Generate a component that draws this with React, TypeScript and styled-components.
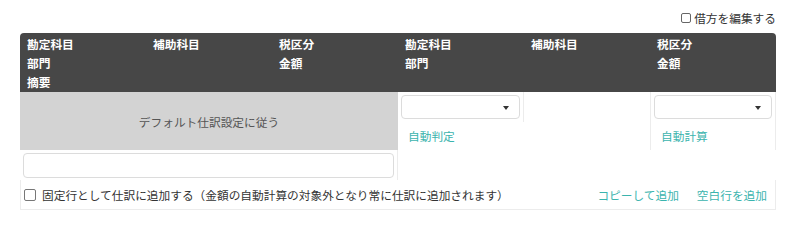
import styled, { createGlobalStyle } from "styled-components"

const GlobalStyle = createGlobalStyle`
  body {
    margin: 0;
    background: #fff;
    font-family: "Noto Sans CJK JP", "Noto Sans", sans-serif;
    font-size: 11.7px;
    color: #333;
  }
`

const Page = styled.div`
  padding: 0 24px 0 20px;
`

const TopBar = styled.div`
  height: 33px;
  display: flex;
  justify-content: flex-end;
  align-items: flex-end;
  padding-bottom: 7px;
  box-sizing: border-box;
`

const CheckLabel = styled.label`
  display: flex;
  align-items: center;
  line-height: 16px;
  color: #333;
  cursor: pointer;
  white-space: nowrap;
`

const Check = styled.input<{ small?: boolean }>`
  appearance: none;
  margin: 0 ${props => props.small ? "3px" : "6px"} 0 0;
  width: ${props => props.small ? "10px" : "12px"};
  height: ${props => props.small ? "10px" : "12px"};
  border: 1px solid ${props => props.small ? "#666" : "#777"};
  border-radius: 2px;
  background: #fff;
  box-sizing: border-box;
`

const Header = styled.div`
  background: #474747;
  border-radius: 4px 4px 0 0;
  display: grid;
  grid-template-columns: repeat(6, 1fr);
  grid-auto-rows: 19px;
  padding: 1px 0 1px;
  color: #fff;
  font-weight: bold;
`

const HeadCell = styled.div`
  padding-left: 7px;
  line-height: 19px;
  white-space: nowrap;
`

const Body = styled.div`
  display: grid;
  grid-template-columns: repeat(6, 1fr);
  grid-template-rows: 30px 28px 30px 30px;
`

const Default = styled.div`
  grid-column: 1 / 4;
  grid-row: 1 / 3;
  background: #d3d3d3;
  color: #555;
  display: flex;
  align-items: center;
  justify-content: center;
`

const Cell = styled.div<{ col: string; row: string; left?: boolean; right?: boolean }>`
  grid-column: ${props => props.col};
  grid-row: ${props => props.row};
  border-left: ${props => props.left ? "1px solid #ececec" : "none"};
  border-right: ${props => props.right ? "1px solid #ececec" : "none"};
  padding: 3px 3px 0 3px;
  box-sizing: border-box;
  min-width: 0;
`

const Select = styled.div`
  position: relative;
  height: 24px;
  border: 1px solid #dcdcdc;
  border-radius: 4px;
  background: #fff;
  box-sizing: border-box;

  &::after {
    content: "";
    position: absolute;
    right: 10px;
    top: 10px;
    border-left: 3.5px solid transparent;
    border-right: 3.5px solid transparent;
    border-top: 4px solid #333;
  }
`

const Auto = styled.a`
  display: block;
  color: #3bb4ae;
  padding: 1px 0 0 7px;
  line-height: 20px;
  text-decoration: none;
`

const TextInput = styled.input`
  display: block;
  width: 100%;
  height: 25px;
  border: 1px solid #dcdcdc;
  border-radius: 4px;
  box-sizing: border-box;
  background: #fff;
`

const Footer = styled.div`
  grid-column: 1 / 7;
  grid-row: 4;
  border: 1px solid #ececec;
  border-top: none;
  display: flex;
  align-items: center;
  justify-content: space-between;
  padding: 0 8px 0 3px;
`

const Links = styled.div`
  display: flex;
  gap: 18px;
`

const Link = styled.a`
  color: #3bb4ae;
  text-decoration: none;
`

const heads = [
  "勘定科目", "補助科目", "税区分", "勘定科目", "補助科目", "税区分",
  "部門", "", "金額", "部門", "", "金額",
  "摘要", "", "", "", "", "",
]

export default function App() {
  return (
    <Page>
      <GlobalStyle />
      <TopBar>
        <CheckLabel>
          <Check type="checkbox" small />
          借方を編集する
        </CheckLabel>
      </TopBar>
      <Header>
        {heads.map((h, i) => <HeadCell key={i}>{h}</HeadCell>)}
      </Header>
      <Body>
        <Default>デフォルト仕訳設定に従う</Default>
        <Cell col="4" row="1" right>
          <Select />
        </Cell>
        <Cell col="6" row="1" left right>
          <Select />
        </Cell>
        <Cell col="4 / 6" row="2">
          <Auto>自動判定</Auto>
        </Cell>
        <Cell col="6" row="2" left right>
          <Auto>自動計算</Auto>
        </Cell>
        <Cell col="1 / 4" row="3" right>
          <TextInput type="text" />
        </Cell>
        <Footer>
          <CheckLabel>
            <Check type="checkbox" />
            固定行として仕訳に追加する（金額の自動計算の対象外となり常に仕訳に追加されます）
          </CheckLabel>
          <Links>
            <Link>コピーして追加</Link>
            <Link>空白行を追加</Link>
          </Links>
        </Footer>
      </Body>
    </Page>
  )
}
